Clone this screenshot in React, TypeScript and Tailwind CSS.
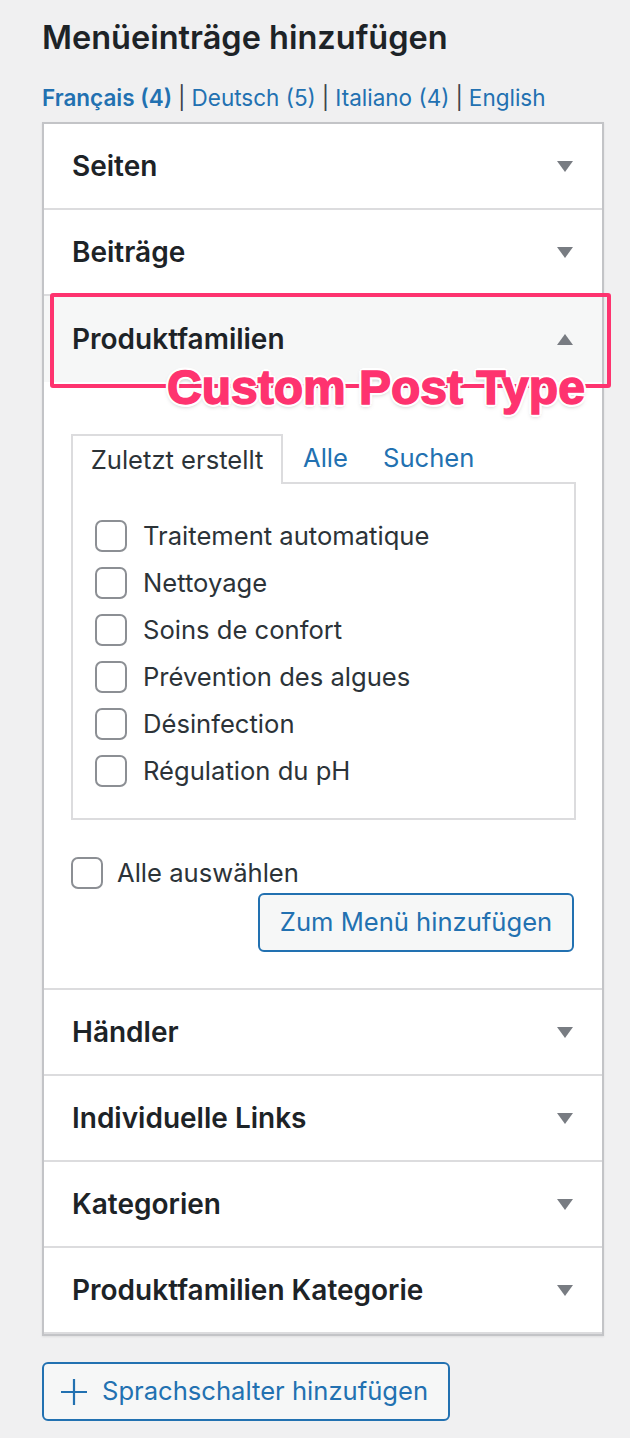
import React from "react";

const font = { fontFamily: "Inter, 'Noto Sans', sans-serif" };

function Arrow({ up = false }: { up?: boolean }) {
  return (
    <svg width="16" height="11" viewBox="0 0 16 11" className="shrink-0">
      {up ? (
        <polygon points="0,11 16,11 8,0" fill="#787c82" />
      ) : (
        <polygon points="0,0 16,0 8,11" fill="#787c82" />
      )}
    </svg>
  );
}

function Header({ title, open = false, last = false }: { title: string; open?: boolean; last?: boolean }) {
  return (
    <div
      className={`flex h-[86px] items-center justify-between pl-[28px] pr-[29px] ${
        open ? "bg-[#f6f7f7]" : "border-b-2 border-[#dcdcde]"
      } ${last ? "border-b-0" : ""}`}
    >
      <span className="text-[28px] font-semibold text-[#1d2327]">{title}</span>
      <Arrow up={open} />
    </div>
  );
}

function Check() {
  return <span className="block h-[32px] w-[32px] shrink-0 rounded-[7px] border-2 border-[#8c8f94] bg-white" />;
}

const items = [
  "Traitement automatique",
  "Nettoyage",
  "Soins de confort",
  "Prévention des algues",
  "Désinfection",
  "Régulation du pH",
];

export default function App() {
  return (
    <div className="relative min-h-[1438px] w-[630px] bg-[#f0f0f1] pl-[42px] pt-[17px]" style={font}>
      <h2 className="text-[32.5px] font-semibold leading-[42px] text-[#1d2327]">Menüeinträge hinzufügen</h2>
      <div className="mt-[23px] flex h-[32px] items-center gap-[6px] text-[22.5px] leading-[32px] text-[#3c434a]">
        <span className="font-semibold text-[#2271b1]">Français (4)</span>
        <span>|</span>
        <span className="text-[#2271b1]">Deutsch (5)</span>
        <span>|</span>
        <span className="text-[#2271b1]">Italiano (4)</span>
        <span>|</span>
        <span className="text-[#2271b1]">English</span>
      </div>

      <div className="mt-[8px] w-[562px] border-2 border-[#c3c4c7] bg-white shadow-[0_1px_2px_rgba(0,0,0,0.08)]">
        <Header title="Seiten" />
        <Header title="Beiträge" />
        <Header title="Produktfamilien" open />
        <div className="border-b-2 border-[#dcdcde] px-[27px] pb-[36px] pt-[52px]">
          <div className="flex items-end text-[25.6px]">
            <div className="relative z-10 -mb-[2px] flex h-[50px] w-[212px] items-center justify-center border-2 border-b-0 border-[#dcdcde] bg-white text-[#2c3338]">
              Zuletzt erstellt
            </div>
            <div className="flex h-[48px] items-center pl-[20px] text-[#2271b1]">Alle</div>
            <div className="flex h-[48px] items-center pl-[35px] text-[#2271b1]">Suchen</div>
          </div>
          <div className="flex w-[505px] flex-col gap-[15px] border-2 border-[#dcdcde] pb-[31px] pl-[22px] pt-[36px]">
            {items.map((t) => (
              <div key={t} className="flex h-[32px] items-center gap-[16px]">
                <Check />
                <span className="text-[25.6px] text-[#2c3338]">{t}</span>
              </div>
            ))}
          </div>
          <div className="mt-[37px] flex h-[32px] items-center gap-[14px]">
            <Check />
            <span className="text-[25.6px] text-[#2c3338]">Alle auswählen</span>
          </div>
          <div className="mt-[4px] flex justify-end pr-[1px]">
            <div className="flex h-[59px] w-[316px] items-center justify-center rounded-[6px] border-2 border-[#2271b1] bg-[#f6f7f7] text-[25.6px] text-[#2271b1]">
              Zum Menü hinzufügen
            </div>
          </div>
        </div>
        <Header title="Händler" />
        <Header title="Individuelle Links" />
        <Header title="Kategorien" />
        <Header title="Produktfamilien Kategorie" last />
      </div>

      <div className="mt-[26px] flex h-[59px] w-[408px] items-center gap-[14px] rounded-[6px] border-2 border-[#2271b1] bg-[#f6f7f7] pl-[16px] text-[25.6px] text-[#2271b1]">
        <svg width="28" height="28" viewBox="0 0 28 28">
          <path d="M14 1v26M1 14h26" stroke="#2271b1" strokeWidth="2.2" fill="none" />
        </svg>
        <span>Sprachschalter hinzufügen</span>
      </div>

      <div className="pointer-events-none absolute left-[50px] top-[293px] h-[95px] w-[561px] rounded-[3px] border-[4px] border-[#fe336f]" />
      <div
        className="pointer-events-none absolute left-[167px] top-[359px] text-[48px] font-bold leading-[58px] text-[#fe336f] [-webkit-text-stroke:1.5px_#fe336f] [text-shadow:3px_0_#fff,-3px_0_#fff,0_3px_#fff,0_-3px_#fff,2px_2px_#fff,-2px_-2px_#fff,2px_-2px_#fff,-2px_2px_#fff,0_2px_5px_rgba(0,0,0,0.35)]"
        style={{ fontFamily: "'Liberation Sans', Arial, sans-serif" }}
      >
        Custom Post Type
      </div>
    </div>
  );
}
